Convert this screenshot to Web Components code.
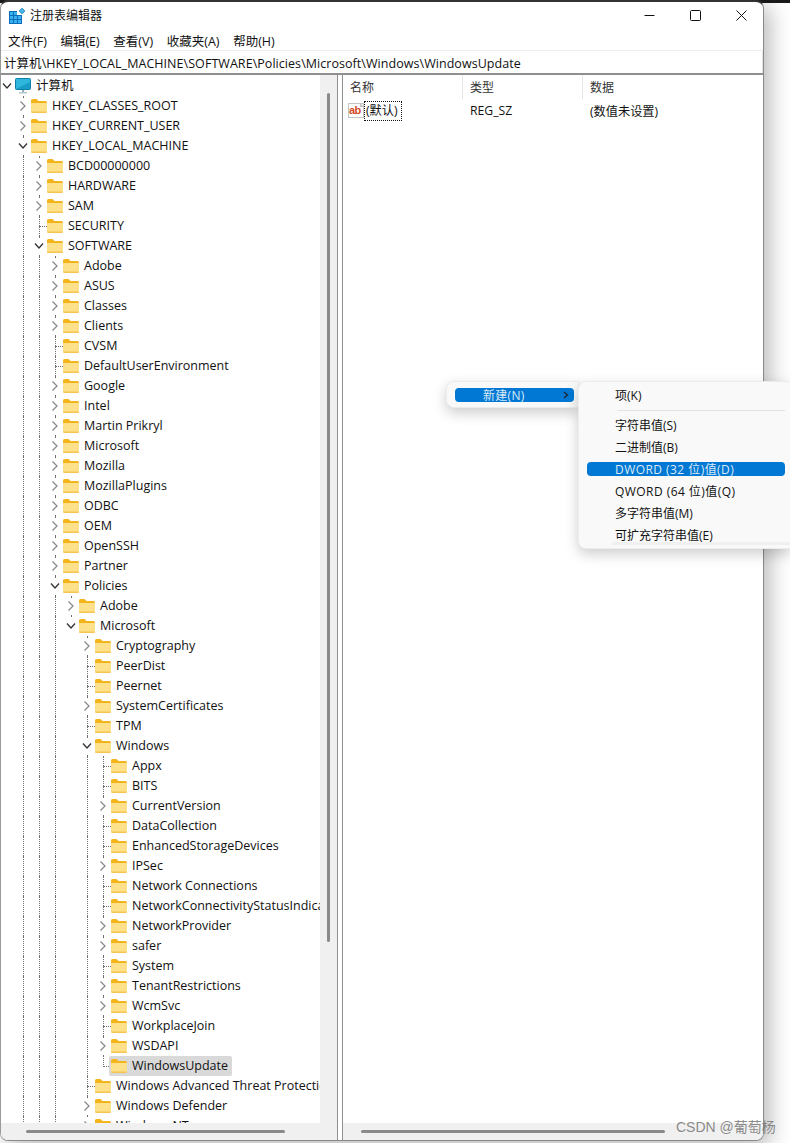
<!DOCTYPE html>
<html>
<head>
<meta charset="utf-8">
<style>
  html, body { margin: 0; padding: 0; background: #fff; }
  body { width: 790px; height: 1143px; overflow: hidden; font: 13px "Open Sans", "Noto Sans CJK SC", sans-serif; color: #111; position: relative;
         background: linear-gradient(#1a1a1a, #1a1a1a) top / 100% 3px no-repeat, #fff; }
</style>
</head>
<body>
<reg-window>
  <reg-titlebar slot="title"></reg-titlebar>
  <reg-menubar slot="menu"></reg-menubar>
  <reg-address slot="address">计算机\HKEY_LOCAL_MACHINE\SOFTWARE\Policies\Microsoft\Windows\WindowsUpdate</reg-address>
  <reg-tree slot="tree"></reg-tree>
  <reg-values slot="values"></reg-values>
</reg-window>
<reg-context></reg-context>
<reg-watermark>CSDN @葡萄杨</reg-watermark>

<script>
const FONT = '"Open Sans", "Noto Sans CJK SC", sans-serif';

class RegWindow extends HTMLElement {
  connectedCallback() {
    this.attachShadow({mode: 'open'}).innerHTML = `
      <style>
        :host { display: block; width: 764px; height: 1141px; box-sizing: border-box; background: #fff; border-radius: 8px;
                border-top: 2px solid #333; border-right: 1px solid #8a8a8a; border-bottom: 1px solid #8a8a8a; border-left: 1px solid #9a9a9a;
                box-shadow: 6px 6px 22px rgba(0,0,0,.28); overflow: hidden; }
        .frame { display: flex; flex-direction: column; height: 100%; }
        .panes { flex: 1; min-height: 0; display: flex; border-top: 2px solid #8f8f8f; }
        .left { width: 336px; flex: none; min-width: 0; display: flex; }
        .split { width: 4px; flex: none; background: #fff; border-left: 1px solid #8f8f8f; border-right: 1px solid #8f8f8f; }
        .right { flex: 1; min-width: 0; display: flex; }
      </style>
      <div class="frame">
        <slot name="title"></slot>
        <slot name="menu"></slot>
        <slot name="address"></slot>
        <div class="panes">
          <div class="left"><slot name="tree"></slot></div>
          <div class="split"></div>
          <div class="right"><slot name="values"></slot></div>
        </div>
      </div>`;
  }
}

class RegTitlebar extends HTMLElement {
  connectedCallback() {
    this.attachShadow({mode: 'open'}).innerHTML = `
      <style>
        :host { display: flex; align-items: center; height: 26px; padding-left: 8px; color: #111; }
        svg { display: block; flex: none; }
        .name { margin-left: 4px; flex: 1; font: 12px ${FONT}; }
        .ctl { display: flex; align-items: center; margin-right: -1px; }
        .ctl span { width: 46px; height: 26px; display: flex; align-items: center; justify-content: center; }
      </style>
      <svg width="17" height="17" viewBox="0 0 17 17">
        <path d="M0 4H8V8H13V17H0Z" fill="#0f6cbd"/>
        <g fill="#35b4ee">
          <rect x="1" y="5" width="3" height="3"/><rect x="5" y="5" width="3" height="3"/>
          <rect x="1" y="9" width="3" height="3"/><rect x="5" y="9" width="3" height="3"/><rect x="9" y="9" width="3" height="3"/>
          <rect x="1" y="13" width="3" height="3"/><rect x="5" y="13" width="3" height="3"/><rect x="9" y="13" width="3" height="3"/>
        </g>
        <rect x="11" y="2" width="4" height="4" transform="rotate(45 13 4)" fill="#45b7ea" stroke="#1b7fb8" stroke-width=".8"/>
      </svg>
      <span class="name">注册表编辑器</span>
      <div class="ctl">
        <span><svg width="11" height="11" viewBox="0 0 11 11"><path d="M0.5 5.5H10.5" stroke="#111" stroke-width="1"/></svg></span>
        <span><svg width="11" height="11" viewBox="0 0 11 11"><rect x=".5" y=".5" width="10" height="10" rx="1" fill="none" stroke="#111"/></svg></span>
        <span><svg width="11" height="11" viewBox="0 0 11 11"><path d="M.5 .5L10.5 10.5M10.5 .5L.5 10.5" stroke="#111" fill="none"/></svg></span>
      </div>`;
  }
}

class RegMenubar extends HTMLElement {
  connectedCallback() {
    const items = ['文件(F)', '编辑(E)', '查看(V)', '收藏夹(A)', '帮助(H)'];
    this.attachShadow({mode: 'open'}).innerHTML = `
      <style>
        :host { display: flex; align-items: center; height: 20px; padding: 2px 0 0 7px; gap: 13.6px; font: 12.5px ${FONT}; border-bottom: 1px solid #ececec; }
      </style>
      ${items.map(t => `<span>${t}</span>`).join('')}`;
  }
}

class RegAddress extends HTMLElement {
  connectedCallback() {
    this.attachShadow({mode: 'open'}).innerHTML = `
      <style>
        :host { display: flex; align-items: center; height: 22px; padding-left: 3px; font: 12.5px ${FONT}; letter-spacing: .05px; white-space: nowrap; border-right: 1px solid #e4e4e4; }
      </style>
      <slot></slot>`;
  }
}

// c = closed, o = open, l = leaf; 4th item: has more siblings below the visible part
const TREE = ['计算机', 'o', [
  ['HKEY_CLASSES_ROOT', 'c'],
  ['HKEY_CURRENT_USER', 'c'],
  ['HKEY_LOCAL_MACHINE', 'o', [
    ['BCD00000000', 'c'], ['HARDWARE', 'c'], ['SAM', 'c'], ['SECURITY', 'l'],
    ['SOFTWARE', 'o', [
      ['Adobe', 'c'], ['ASUS', 'c'], ['Classes', 'c'], ['Clients', 'c'], ['CVSM', 'l'], ['DefaultUserEnvironment', 'l'],
      ['Google', 'c'], ['Intel', 'c'], ['Martin Prikryl', 'c'], ['Microsoft', 'c'], ['Mozilla', 'c'], ['MozillaPlugins', 'c'],
      ['ODBC', 'c'], ['OEM', 'c'], ['OpenSSH', 'c'], ['Partner', 'c'],
      ['Policies', 'o', [
        ['Adobe', 'c'],
        ['Microsoft', 'o', [
          ['Cryptography', 'c'], ['PeerDist', 'l'], ['Peernet', 'l'], ['SystemCertificates', 'c'], ['TPM', 'l'],
          ['Windows', 'o', [
            ['Appx', 'l'], ['BITS', 'l'], ['CurrentVersion', 'c'], ['DataCollection', 'l'], ['EnhancedStorageDevices', 'l'],
            ['IPSec', 'c'], ['Network Connections', 'l'], ['NetworkConnectivityStatusIndicator', 'l'], ['NetworkProvider', 'c'],
            ['safer', 'c'], ['System', 'l'], ['TenantRestrictions', 'c'], ['WcmSvc', 'c'], ['WorkplaceJoin', 'l'], ['WSDAPI', 'c'],
            ['WindowsUpdate', 'l']
          ]],
          ['Windows Advanced Threat Protection', 'l'], ['Windows Defender', 'c'], ['Windows NT', 'c']
        ]]
      ], 1]
    ], 1]
  ], 1]
]];

const CHEVRON_C = '<svg class="shut" width="8" height="10" viewBox="0 0 8 10"><path d="M1.5 .5L6 5L1.5 9.5" fill="none" stroke="#8a8a8a" stroke-width="1.3"/></svg>';
const CHEVRON_O = '<svg class="open" width="10" height="8" viewBox="0 0 10 8"><path d="M1 1.5L5 6L9 1.5" fill="none" stroke="#333" stroke-width="1.3"/></svg>';
const FOLDER = `<svg width="16" height="14" viewBox="0 0 16 14"><path d="M0 1.5Q0 0 1.5 0H5.5L7.5 2H14.5Q16 2 16 3.5V5H0Z" fill="#f4b41c"/><path d="M0 4H16V12.5Q16 14 14.5 14H1.5Q0 14 0 12.5Z" fill="#fde08a"/><path d="M0 12.5H16Q16 14 14.5 14H1.5Q0 14 0 12.5Z" fill="#f5c44e"/></svg>`;
const COMPUTER = `<svg width="16" height="16" viewBox="0 0 16 16"><rect x=".5" y=".5" width="15" height="11" rx="1" fill="#2fb6dc" stroke="#0f7ea8"/><path d="M1 11L15 4V11Z" fill="#1a9cc8"/><rect x="7" y="12" width="2" height="2" fill="#8fb0bf"/><rect x="4" y="14" width="8" height="1.5" fill="#b4c8d2"/></svg>`;

class RegTree extends HTMLElement {
  connectedCallback() {
    const rows = [];
    const walk = (node, depth, guides, lastInList) => {
      const last = lastInList && !node[3];
      rows.push(`<reg-node depth="${depth}" kind="${node[1]}" guides="${guides.join(',')}" last="${last ? 1 : 0}" ${node[0] === 'WindowsUpdate' ? 'selected' : ''}>${node[0]}</reg-node>`);
      if (node[2]) {
        const g = depth > 0 && !last ? guides.concat(depth) : guides;
        node[2].forEach((c, i) => walk(c, depth + 1, g, i === node[2].length - 1));
      }
    };
    walk(TREE, 0, [], true);
    this.attachShadow({mode: 'open'}).innerHTML = `
      <style>
        :host { display: grid; grid-template-columns: 319px 17px; grid-template-rows: minmax(0, 1fr) 17px; width: 100%; height: 100%; background: #f0f0f0; font: 12.5px ${FONT}; }
        .rows { background: #fff; overflow: hidden; padding: 1px 0 0 1px; }
        .vbar { display: flex; justify-content: center; padding-top: 18px; }
        .vbar i { display: block; width: 3px; height: 849px; background: #8a8a8a; border-radius: 2px; }
        .hbar { display: flex; align-items: center; padding-left: 25px; }
        .hbar i { display: block; width: 259px; height: 3px; background: #8a8a8a; border-radius: 2px; }
      </style>
      <div class="rows">${rows.join('')}</div>
      <div class="vbar"><i></i></div>
      <div class="hbar"><i></i></div>
      <div></div>`;
  }
}

class RegNode extends HTMLElement {
  connectedCallback() {
    const depth = +this.getAttribute('depth');
    const kind = this.getAttribute('kind');
    const last = this.getAttribute('last') === '1';
    const guides = (this.getAttribute('guides') || '').split(',').filter(Boolean).map(Number);
    const lines = guides.map(d => `<b class="v" style="left:${16 * d + 5}px"></b>`).join('');
    let tie = '';
    if (depth > 0) {
      const x = 16 * depth + 5;
      tie = `<b class="v" style="left:${x}px;${last ? 'height:11px' : ''}"></b>`;
      if (kind === 'l') tie += `<b class="h" style="left:${x}px"></b>`;
    }
    const arrow = kind === 'c' ? CHEVRON_C : kind === 'o' ? CHEVRON_O : '';
    this.attachShadow({mode: 'open'}).innerHTML = `
      <style>
        :host { display: flex; align-items: center; height: 20px; position: relative; white-space: nowrap; }
        .v { position: absolute; top: 0; height: 20px; width: 0; border-left: 1px dotted #707070; }
        .h { position: absolute; top: 10px; width: 8px; height: 0; border-top: 1px dotted #707070; }
        .pad { flex: none; }
        .arrow { width: 12px; height: 16px; flex: none; display: flex; align-items: center; justify-content: center; position: relative; z-index: 1; }
        .arrow.has { background: #fff; }
        .open, .shut { transform: translateX(-1px); }
        .item { display: flex; align-items: center; height: 20px; margin-left: -1px; padding: 0 4px 0 2px; border-radius: 2px; position: relative; z-index: 1; }
        :host([selected]) .item { background: #d9d9d9; }
        .icon { flex: none; display: flex; }
        .label { margin-left: 5px; line-height: 20px; }
      </style>
      ${lines}${tie}
      <span class="pad" style="width:${16 * depth}px"></span>
      <span class="arrow ${arrow ? 'has' : ''}">${arrow}</span>
      <span class="item">
        <span class="icon">${depth === 0 ? COMPUTER : FOLDER}</span>
        <span class="label"><slot></slot></span>
      </span>`;
  }
}

class RegValues extends HTMLElement {
  connectedCallback() {
    this.attachShadow({mode: 'open'}).innerHTML = `
      <style>
        :host { display: flex; flex-direction: column; width: 100%; height: 100%; font: 12.2px ${FONT}; }
        .head { display: grid; grid-template-columns: 120px 120px 1fr; height: 24px; font-size: 12px; }
        .head span { display: flex; align-items: center; padding-left: 7px; border-right: 1px solid #e5e5e5; color: #333; box-sizing: border-box; }
        .head span:last-child { border: 0; }
        .row { display: grid; grid-template-columns: 120px 120px 1fr; height: 21px; margin-top: 1px; align-items: center; }
        .row > span { padding-left: 7px; }
        .row > .first { display: flex; align-items: center; padding-left: 5px; }
        .first em { font-style: normal; border: 1px dotted #111; padding: 0 3px 0 1px; height: 20px; line-height: 18px; box-sizing: border-box; }
        .fill { flex: 1; }
        .bottom { height: 17px; background: #f0f0f0; display: flex; align-items: center; padding-left: 18px; }
        .bottom i { display: block; width: 304px; height: 3px; background: #8a8a8a; border-radius: 2px; }
        .ab { width: 16px; height: 15px; flex: none; border: 1px solid #c4c4c4; box-sizing: border-box; font: bold 11px "Liberation Sans", sans-serif; color: #d24a26; background: #fff; line-height: 12px; letter-spacing: -.5px; overflow: hidden; position: relative; }
        .ab::after { content: ""; position: absolute; right: -1px; top: -1px; border-style: solid; border-width: 0 4px 4px 0; border-color: transparent #fff #c4c4c4 transparent; }
      </style>
      <div class="head"><span>名称</span><span>类型</span><span>数据</span></div>
      <div class="row">
        <span class="first"><span class="ab">ab</span><em>(默认)</em></span>
        <span>REG_SZ</span>
        <span>(数值未设置)</span>
      </div>
      <div class="fill"></div>
      <div class="bottom"><i></i></div>`;
  }
}

class RegContext extends HTMLElement {
  connectedCallback() {
    const sub = [['项(K)'], null, ['字符串值(S)'], ['二进制值(B)'], ['DWORD (32 位)值(D)', 1, 1], ['QWORD (64 位)值(Q)', 0, 1], ['多字符串值(M)'], ['可扩充字符串值(E)']];
    this.attachShadow({mode: 'open'}).innerHTML = `
      <style>
        :host { position: absolute; left: 446px; top: 381px; display: flex; align-items: flex-start; font: 12px ${FONT}; color: #111; }
        .m { background: #f9f9f9; box-sizing: border-box; border: 1px solid #ececec; box-shadow: 0 5px 14px rgba(0,0,0,.2); }
        .m1 { width: 133px; height: 27px; border-radius: 8px 0 0 8px; padding: 6px 4px 0 8px; }
        .hl { height: 14px; border-radius: 4px; background: #0078d4; color: #fff; display: flex; align-items: center; }
        .m1 .hl { padding-left: 28px; justify-content: space-between; padding-right: 5px; color: #dceaf7; letter-spacing: .3px; }
        .m2 { width: 213px; height: 168px; border-radius: 8px 0 0 8px; padding: 2px 5px 0 8px; position: relative; margin-left: -1px; }
        .i { height: 22px; display: flex; align-items: center; padding-left: 28px; }
        .i.wide { letter-spacing: .45px; }
        .i.hl-row span { display: flex; align-items: center; height: 14px; flex: 1; margin-left: -28px; padding-left: 28px; border-radius: 4px; background: #0078d4; color: #dceaf7; }
        .sep { height: 1px; background: #e3e3e3; margin: 4px 0 3px 30px; }
        .band { position: absolute; left: 33px; right: 0; bottom: 3px; height: 3px; background: #f0f0f0; }
      </style>
      <div class="m m1"><div class="hl"><span>新建(N)</span><svg width="6" height="8" viewBox="0 0 6 8"><path d="M1 1L4.5 4L1 7" fill="none" stroke="#222" stroke-width="1.2"/></svg></div></div>
      <div class="m m2">
        ${sub.map(s => s === null ? '<div class="sep"></div>' : `<div class="i ${s[1] ? 'hl-row' : ''} ${s[2] ? 'wide' : ''}"><span>${s[0]}</span></div>`).join('')}
        <div class="band"></div>
      </div>`;
  }
}

class RegWatermark extends HTMLElement {
  connectedCallback() {
    this.attachShadow({mode: 'open'}).innerHTML = `
      <style>
        :host { position: absolute; left: 676px; top: 1116px; font: 14px "Liberation Sans", "Noto Sans CJK SC", sans-serif; color: rgba(110,110,110,.8); white-space: nowrap; }
      </style>
      <slot></slot>`;
  }
}

customElements.define('reg-window', RegWindow);
customElements.define('reg-titlebar', RegTitlebar);
customElements.define('reg-menubar', RegMenubar);
customElements.define('reg-address', RegAddress);
customElements.define('reg-tree', RegTree);
customElements.define('reg-node', RegNode);
customElements.define('reg-values', RegValues);
customElements.define('reg-context', RegContext);
customElements.define('reg-watermark', RegWatermark);
</script>
</body>
</html>
